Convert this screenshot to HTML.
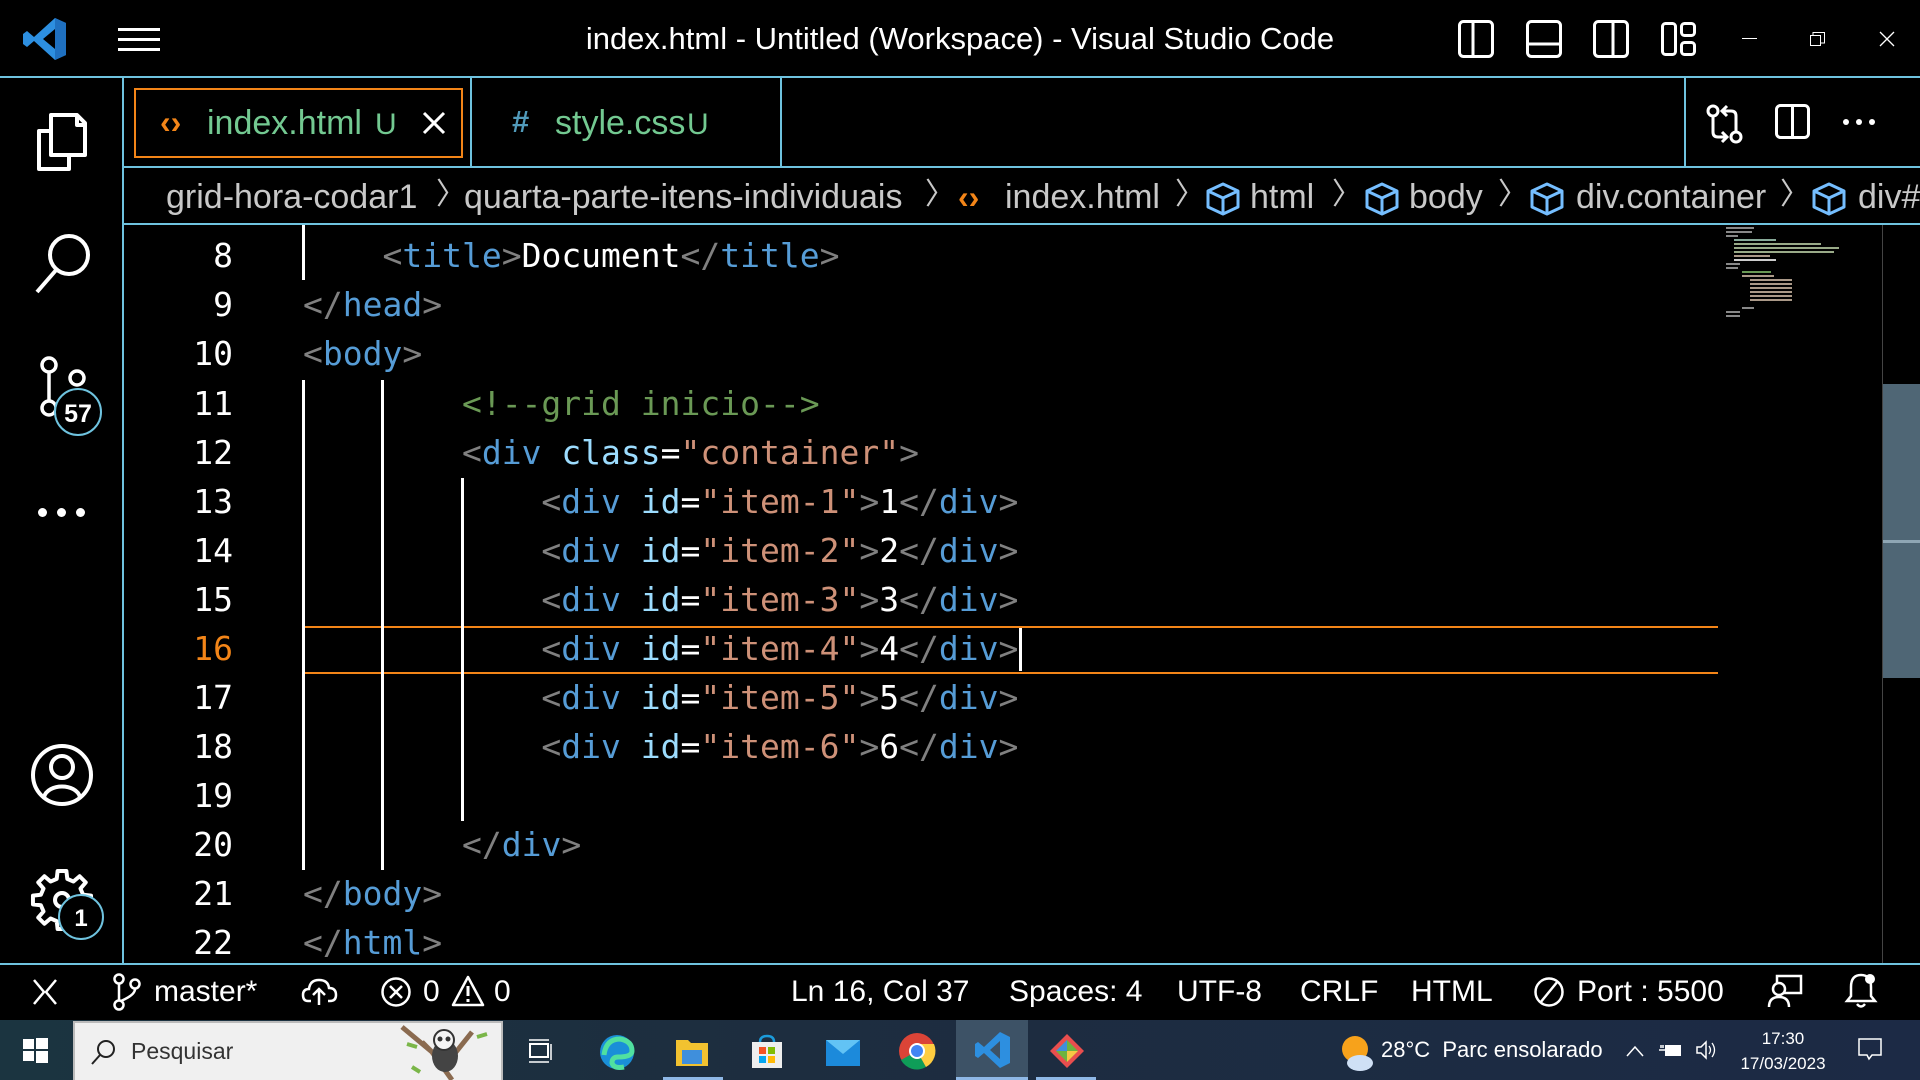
<!DOCTYPE html>
<html><head><meta charset="utf-8">
<style>
*{margin:0;padding:0;box-sizing:border-box}
body{width:1920px;height:1080px;background:#000;overflow:hidden;position:relative;font-family:"Liberation Sans","DejaVu Sans",sans-serif;color:#fff}
.a{position:absolute}
.bl{background:#6fc3df}
.ui{font-size:31px;white-space:nowrap;line-height:1}
.code{font-family:"DejaVu Sans Mono","Liberation Mono",monospace;font-size:33px;white-space:pre;line-height:49px}
.ln{position:absolute;left:120px;width:113px;text-align:right}
.cl{position:absolute;left:303px}
.g{color:#808080}.t{color:#569cd6}.at{color:#9cdcfe}.s{color:#ce9178}.c{color:#6a9955}.w{color:#fff}
.gd{position:absolute;width:3px;background:#fff}
.bc{color:#c8c8c8}
svg{position:absolute;overflow:visible}
.st{font-size:30px;top:975px;position:absolute;white-space:nowrap}
</style></head><body>

<!-- title bar -->
<svg style="left:22px;top:16px" width="46" height="46" viewBox="0 0 46 46"><path d="M33 2 L44 7 V39 L33 44 L12 25 L5 31 L1 28 V18 L5 15 L12 21 Z M33 13 L21 23 L33 33 Z" fill="#2d8fe0"/><path d="M33 2 L44 7 V39 L33 44 Z" fill="#1f70c0"/></svg>
<div class="a" style="left:118px;top:28px;width:42px;height:3px;background:#fff"></div>
<div class="a" style="left:118px;top:38px;width:42px;height:3px;background:#fff"></div>
<div class="a" style="left:118px;top:48px;width:42px;height:3px;background:#fff"></div>
<div class="a ui" style="left:0;width:1920px;text-align:center;top:23px;font-size:31px">index.html - Untitled (Workspace) - Visual Studio Code</div>
<svg style="left:1458px;top:20px" width="36" height="38"><rect x="1.5" y="1.5" width="33" height="35" rx="4" fill="none" stroke="#fff" stroke-width="3"/><line x1="15" y1="2" x2="15" y2="36" stroke="#fff" stroke-width="3"/></svg>
<svg style="left:1526px;top:20px" width="36" height="38"><rect x="1.5" y="1.5" width="33" height="35" rx="4" fill="none" stroke="#fff" stroke-width="3"/><line x1="2" y1="24" x2="34" y2="24" stroke="#fff" stroke-width="3"/></svg>
<svg style="left:1593px;top:20px" width="36" height="38"><rect x="1.5" y="1.5" width="33" height="35" rx="4" fill="none" stroke="#fff" stroke-width="3"/><line x1="20" y1="2" x2="20" y2="36" stroke="#fff" stroke-width="3"/></svg>
<svg style="left:1661px;top:22px" width="36" height="34"><rect x="1.5" y="1.5" width="13" height="31" rx="3" fill="none" stroke="#fff" stroke-width="3"/><rect x="20.5" y="1.5" width="13" height="12" rx="3" fill="none" stroke="#fff" stroke-width="3"/><rect x="20.5" y="20.5" width="13" height="12" rx="3" fill="none" stroke="#fff" stroke-width="3"/></svg>
<div class="a" style="left:1742px;top:38px;width:15px;height:1px;background:#fff"></div>
<svg style="left:1810px;top:31px" width="16" height="16"><rect x="0.5" y="4.5" width="10" height="10" fill="none" stroke="#fff"/><path d="M3 4 V1.5 H14.5 V12 H11" fill="none" stroke="#fff"/></svg>
<svg style="left:1879px;top:31px" width="16" height="16"><path d="M1 1 L15 15 M15 1 L1 15" stroke="#fff" stroke-width="1.3"/></svg>
<div class="a bl" style="left:0;top:76px;width:1920px;height:2px"></div>

<!-- activity bar -->
<div class="a bl" style="left:122px;top:77px;width:2px;height:887px"></div>
<svg style="left:33px;top:109px" width="58" height="62" viewBox="0 0 58 62"><path d="M18 10 V46 H52 V14 L44 6 H18 Z M44 6 V16 H52" fill="none" stroke="#fff" stroke-width="4" stroke-linejoin="round"/><path d="M18 22 H6 V60 H36 V48" fill="none" stroke="#fff" stroke-width="4" stroke-linejoin="round"/></svg>
<svg style="left:33px;top:232px" width="60" height="62"><circle cx="36" cy="23" r="19" fill="none" stroke="#fff" stroke-width="4"/><line x1="24" y1="37" x2="4" y2="60" stroke="#fff" stroke-width="4"/></svg>
<svg style="left:37px;top:356px" width="70" height="74"><circle cx="12" cy="9" r="7" fill="none" stroke="#fff" stroke-width="3.5"/><circle cx="40" cy="22" r="7" fill="none" stroke="#fff" stroke-width="3.5"/><circle cx="12" cy="52" r="7" fill="none" stroke="#fff" stroke-width="3.5"/><line x1="12" y1="16" x2="12" y2="45" stroke="#fff" stroke-width="3.5"/><circle cx="41" cy="56" r="23" fill="#000" stroke="#6fc3df" stroke-width="2"/><text x="41" y="66" fill="#fff" font-size="25" font-family="Liberation Sans" font-weight="bold" text-anchor="middle">57</text></svg>
<div class="a" style="left:38px;top:508px;width:9px;height:9px;border-radius:50%;background:#fff"></div>
<div class="a" style="left:57px;top:508px;width:9px;height:9px;border-radius:50%;background:#fff"></div>
<div class="a" style="left:76px;top:508px;width:9px;height:9px;border-radius:50%;background:#fff"></div>
<svg style="left:30px;top:743px" width="64" height="64"><circle cx="32" cy="32" r="29" fill="none" stroke="#fff" stroke-width="4"/><circle cx="32" cy="24" r="11" fill="none" stroke="#fff" stroke-width="4"/><path d="M14 54 C18 40 46 40 50 54" fill="none" stroke="#fff" stroke-width="4"/></svg>
<svg style="left:30px;top:868px" width="76" height="72"><g transform="translate(32,32)"><path d="M-5 -29 H5 L6 -20 L13 -17 L20 -23 L27 -16 L21 -9 L24 -2 L33 -1 V9 L24 10 L21 17 L27 24 L20 31 L13 25 L6 28 L5 37 H-5 L-6 28 L-13 25 L-20 31 L-27 24 L-21 17 L-24 10 L-33 9 V-1 L-24 -2 L-21 -9 L-27 -16 L-20 -23 L-13 -17 L-6 -20 Z" transform="scale(0.88) translate(0,-4)" fill="none" stroke="#fff" stroke-width="4.5" stroke-linejoin="round"/><circle cx="0" cy="0" r="7" fill="none" stroke="#fff" stroke-width="4"/></g><circle cx="51" cy="49" r="22" fill="#000" stroke="#6fc3df" stroke-width="2"/><text x="51" y="58" fill="#fff" font-size="24" font-family="Liberation Sans" font-weight="bold" text-anchor="middle">1</text></svg>

<!-- tabs -->
<div class="a" style="left:134px;top:88px;width:329px;height:70px;border:2px solid #f38518"></div>
<div class="a ui" style="left:160px;top:106px;color:#f38518;font-size:32px;font-weight:bold">‹›</div>
<div class="a ui" style="left:207px;top:106px;color:#73c991;font-size:34px">index.html</div>
<div class="a ui" style="left:375px;top:110px;color:#73c991;font-size:30px">U</div>
<svg style="left:423px;top:112px" width="22" height="22"><path d="M1 1 L21 21 M21 1 L1 21" stroke="#fff" stroke-width="3"/></svg>
<div class="a bl" style="left:470px;top:77px;width:2px;height:90px"></div>
<div class="a ui" style="left:512px;top:106px;color:#519aba;font-size:31px;font-weight:bold">#</div>
<div class="a ui" style="left:555px;top:106px;color:#73c991;font-size:34px">style.css</div>
<div class="a ui" style="left:687px;top:110px;color:#73c991;font-size:30px">U</div>
<div class="a bl" style="left:780px;top:77px;width:2px;height:90px"></div>
<div class="a bl" style="left:1684px;top:77px;width:2px;height:90px"></div>
<svg style="left:1706px;top:104px" width="38" height="40"><circle cx="7" cy="7" r="5" fill="none" stroke="#fff" stroke-width="3"/><circle cx="30" cy="33" r="5" fill="none" stroke="#fff" stroke-width="3"/><path d="M7 12 V28 Q7 33 12 33 H20 M16 28 L21 33 L16 38" fill="none" stroke="#fff" stroke-width="3"/><path d="M30 28 V12 Q30 7 25 7 H17 M21 2 L16 7 L21 12" fill="none" stroke="#fff" stroke-width="3"/></svg>
<svg style="left:1775px;top:104px" width="36" height="36"><rect x="1.5" y="1.5" width="32" height="32" rx="4" fill="none" stroke="#fff" stroke-width="3"/><line x1="17.5" y1="2" x2="17.5" y2="34" stroke="#fff" stroke-width="3"/></svg>
<div class="a" style="left:1843px;top:119px;width:6px;height:6px;border-radius:50%;background:#fff"></div>
<div class="a" style="left:1856px;top:119px;width:6px;height:6px;border-radius:50%;background:#fff"></div>
<div class="a" style="left:1869px;top:119px;width:6px;height:6px;border-radius:50%;background:#fff"></div>
<div class="a bl" style="left:123px;top:166px;width:1797px;height:2px"></div>

<!-- breadcrumbs -->
<div class="a ui bc" style="left:166px;top:180px;font-size:34px">grid-hora-codar1</div>
<div class="a ui bc" style="left:436px;top:180px;font-size:30px">〉</div>
<div class="a ui bc" style="left:464px;top:180px;font-size:34px">quarta-parte-itens-individuais</div>
<div class="a ui bc" style="left:925px;top:180px;font-size:30px">〉</div>
<div class="a ui" style="left:958px;top:181px;font-size:32px;color:#f38518;font-weight:bold">‹›</div>
<div class="a ui bc" style="left:1005px;top:180px;font-size:34px">index.html</div>
<div class="a ui bc" style="left:1175px;top:180px;font-size:30px">〉</div>
<div class="a ui bc" style="left:1250px;top:180px;font-size:34px">html</div>
<div class="a ui bc" style="left:1332px;top:180px;font-size:30px">〉</div>
<div class="a ui bc" style="left:1409px;top:180px;font-size:34px">body</div>
<div class="a ui bc" style="left:1498px;top:180px;font-size:30px">〉</div>
<div class="a ui bc" style="left:1576px;top:180px;font-size:34px">div.container</div>
<div class="a ui bc" style="left:1780px;top:180px;font-size:30px">〉</div>
<div class="a ui bc" style="left:1858px;top:180px;font-size:34px">div#</div>
<svg style="left:1206px;top:182px" width="34" height="34"><g fill="none" stroke="#75beff" stroke-width="3" stroke-linejoin="round"><path d="M17 2 L32 9 V25 L17 32 L2 25 V9 Z"/><path d="M2 9 L17 16 L32 9 M17 16 V32"/></g></svg>
<svg style="left:1365px;top:182px" width="34" height="34"><g fill="none" stroke="#75beff" stroke-width="3" stroke-linejoin="round"><path d="M17 2 L32 9 V25 L17 32 L2 25 V9 Z"/><path d="M2 9 L17 16 L32 9 M17 16 V32"/></g></svg>
<svg style="left:1530px;top:182px" width="34" height="34"><g fill="none" stroke="#75beff" stroke-width="3" stroke-linejoin="round"><path d="M17 2 L32 9 V25 L17 32 L2 25 V9 Z"/><path d="M2 9 L17 16 L32 9 M17 16 V32"/></g></svg>
<svg style="left:1812px;top:182px" width="34" height="34"><g fill="none" stroke="#75beff" stroke-width="3" stroke-linejoin="round"><path d="M17 2 L32 9 V25 L17 32 L2 25 V9 Z"/><path d="M2 9 L17 16 L32 9 M17 16 V32"/></g></svg>
<div class="a bl" style="left:123px;top:223px;width:1797px;height:2px"></div>

<!-- editor -->
<div class="a" style="left:303px;top:626px;width:1415px;height:48px;border-top:2px solid #f38518;border-bottom:2px solid #f38518"></div>
<div class="gd" style="left:302px;top:225px;height:55px"></div>
<div class="gd" style="left:302px;top:380px;height:490px"></div>
<div class="gd" style="left:381px;top:380px;height:490px"></div>
<div class="gd" style="left:461px;top:478px;height:343px"></div>
<div class="a code" style="left:0;top:231px;width:1880px;height:735px;overflow:hidden">
<div class="ln" style="top:0">8</div><div class="cl" style="top:0">    <span class="g">&lt;</span><span class="t">title</span><span class="g">&gt;</span>Document<span class="g">&lt;/</span><span class="t">title</span><span class="g">&gt;</span></div>
<div class="ln" style="top:49px">9</div><div class="cl" style="top:49px"><span class="g">&lt;/</span><span class="t">head</span><span class="g">&gt;</span></div>
<div class="ln" style="top:98px">10</div><div class="cl" style="top:98px"><span class="g">&lt;</span><span class="t">body</span><span class="g">&gt;</span></div>
<div class="ln" style="top:148px">11</div><div class="cl" style="top:148px">        <span class="c">&lt;!--grid inicio--&gt;</span></div>
<div class="ln" style="top:197px">12</div><div class="cl" style="top:197px">        <span class="g">&lt;</span><span class="t">div</span> <span class="at">class</span>=<span class="s">"container"</span><span class="g">&gt;</span></div>
<div class="ln" style="top:246px">13</div><div class="cl" style="top:246px">            <span class="g">&lt;</span><span class="t">div</span> <span class="at">id</span>=<span class="s">"item-1"</span><span class="g">&gt;</span>1<span class="g">&lt;/</span><span class="t">div</span><span class="g">&gt;</span></div>
<div class="ln" style="top:295px">14</div><div class="cl" style="top:295px">            <span class="g">&lt;</span><span class="t">div</span> <span class="at">id</span>=<span class="s">"item-2"</span><span class="g">&gt;</span>2<span class="g">&lt;/</span><span class="t">div</span><span class="g">&gt;</span></div>
<div class="ln" style="top:344px">15</div><div class="cl" style="top:344px">            <span class="g">&lt;</span><span class="t">div</span> <span class="at">id</span>=<span class="s">"item-3"</span><span class="g">&gt;</span>3<span class="g">&lt;/</span><span class="t">div</span><span class="g">&gt;</span></div>
<div class="ln" style="top:393px;color:#f38518">16</div><div class="cl" style="top:393px">            <span class="g">&lt;</span><span class="t">div</span> <span class="at">id</span>=<span class="s">"item-4"</span><span class="g">&gt;</span>4<span class="g">&lt;/</span><span class="t">div</span><span class="g">&gt;</span></div>
<div class="ln" style="top:442px">17</div><div class="cl" style="top:442px">            <span class="g">&lt;</span><span class="t">div</span> <span class="at">id</span>=<span class="s">"item-5"</span><span class="g">&gt;</span>5<span class="g">&lt;/</span><span class="t">div</span><span class="g">&gt;</span></div>
<div class="ln" style="top:491px">18</div><div class="cl" style="top:491px">            <span class="g">&lt;</span><span class="t">div</span> <span class="at">id</span>=<span class="s">"item-6"</span><span class="g">&gt;</span>6<span class="g">&lt;/</span><span class="t">div</span><span class="g">&gt;</span></div>
<div class="ln" style="top:540px">19</div>
<div class="ln" style="top:589px">20</div><div class="cl" style="top:589px">        <span class="g">&lt;/</span><span class="t">div</span><span class="g">&gt;</span></div>
<div class="ln" style="top:638px">21</div><div class="cl" style="top:638px"><span class="g">&lt;/</span><span class="t">body</span><span class="g">&gt;</span></div>
<div class="ln" style="top:687px">22</div><div class="cl" style="top:687px"><span class="g">&lt;/</span><span class="t">html</span><span class="g">&gt;</span></div>
</div>
<div class="a" style="left:1019px;top:628px;width:3px;height:43px;background:#fff"></div>

<!-- minimap -->
<svg style="left:1726px;top:226px" width="120" height="95">
<g stroke-width="2">
<line x1="0" y1="2" x2="28" y2="2" stroke="#888"/><line x1="0" y1="6" x2="26" y2="6" stroke="#888"/><line x1="0" y1="10" x2="12" y2="10" stroke="#888"/>
<line x1="8" y1="14" x2="50" y2="14" stroke="#8a9"/><line x1="8" y1="18" x2="95" y2="18" stroke="#9a8"/><line x1="8" y1="22" x2="113" y2="22" stroke="#9a8"/><line x1="8" y1="26" x2="108" y2="26" stroke="#9a8"/><line x1="8" y1="30" x2="44" y2="30" stroke="#a98"/><line x1="8" y1="34" x2="50" y2="34" stroke="#ccc"/>
<line x1="0" y1="38" x2="14" y2="38" stroke="#888"/><line x1="0" y1="42" x2="12" y2="42" stroke="#888"/>
<line x1="16" y1="46" x2="45" y2="46" stroke="#6a9955"/><line x1="16" y1="50" x2="48" y2="50" stroke="#a98"/>
<line x1="24" y1="54" x2="66" y2="54" stroke="#a98"/><line x1="24" y1="58" x2="66" y2="58" stroke="#a98"/><line x1="24" y1="62" x2="66" y2="62" stroke="#a98"/><line x1="24" y1="66" x2="66" y2="66" stroke="#a98"/><line x1="24" y1="70" x2="66" y2="70" stroke="#a98"/><line x1="24" y1="74" x2="66" y2="74" stroke="#a98"/>
<line x1="16" y1="82" x2="28" y2="82" stroke="#888"/><line x1="0" y1="86" x2="14" y2="86" stroke="#888"/><line x1="0" y1="90" x2="14" y2="90" stroke="#888"/>
</g></svg>
<div class="a" style="left:1882px;top:225px;width:1px;height:739px;background:#444"></div>
<div class="a" style="left:1883px;top:384px;width:37px;height:294px;background:#4f6675"></div>
<div class="a" style="left:1883px;top:540px;width:37px;height:3px;background:#8fa6b4"></div>

<!-- status bar -->
<div class="a bl" style="left:0;top:963px;width:1920px;height:2px"></div>
<svg style="left:32px;top:978px" width="26" height="28"><path d="M2 2 L12 14 L2 26 M24 2 L14 14 L24 26" fill="none" stroke="#fff" stroke-width="2.5"/></svg>
<svg style="left:112px;top:973px" width="30" height="38"><circle cx="7" cy="6" r="4.5" fill="none" stroke="#fff" stroke-width="2.5"/><circle cx="23" cy="11" r="4.5" fill="none" stroke="#fff" stroke-width="2.5"/><circle cx="7" cy="32" r="4.5" fill="none" stroke="#fff" stroke-width="2.5"/><path d="M7 11 V27 M23 16 Q23 22 9 28" fill="none" stroke="#fff" stroke-width="2.5"/></svg>
<div class="st" style="left:154px">master*</div>
<svg style="left:302px;top:977px" width="36" height="30"><path d="M9 24 H6 Q1 24 1 18 Q1 12 7 12 Q8 3 17 3 Q26 3 27 11 Q34 11 34 18 Q34 24 28 24 H26" fill="none" stroke="#fff" stroke-width="2.5"/><path d="M17 28 V13 M11 18 L17 12 L23 18" fill="none" stroke="#fff" stroke-width="2.5"/></svg>
<svg style="left:380px;top:976px" width="32" height="32"><circle cx="16" cy="16" r="13.5" fill="none" stroke="#fff" stroke-width="2.5"/><path d="M10 10 L22 22 M22 10 L10 22" stroke="#fff" stroke-width="2.5"/></svg>
<div class="st" style="left:423px">0</div>
<svg style="left:451px;top:975px" width="34" height="32"><path d="M17 2 L32 30 H2 Z" fill="none" stroke="#fff" stroke-width="2.5" stroke-linejoin="round"/><path d="M17 11 V21 M17 24 V27" stroke="#fff" stroke-width="3"/></svg>
<div class="st" style="left:494px">0</div>
<div class="st" style="left:791px">Ln 16, Col 37</div>
<div class="st" style="left:1009px">Spaces: 4</div>
<div class="st" style="left:1177px">UTF-8</div>
<div class="st" style="left:1300px">CRLF</div>
<div class="st" style="left:1411px">HTML</div>
<svg style="left:1533px;top:976px" width="32" height="32"><circle cx="16" cy="16" r="13.5" fill="none" stroke="#fff" stroke-width="2.5"/><path d="M25 5 L7 27" stroke="#fff" stroke-width="2.5"/></svg>
<div class="st" style="left:1577px">Port : 5500</div>
<svg style="left:1767px;top:974px" width="36" height="36"><rect x="10" y="2" width="24" height="17" fill="none" stroke="#fff" stroke-width="2.5"/><circle cx="12" cy="15" r="6" fill="#000" stroke="#fff" stroke-width="2.5"/><path d="M2 33 Q2 23 12 23 Q22 23 22 33" fill="#000" stroke="#fff" stroke-width="2.5"/></svg>
<svg style="left:1845px;top:972px" width="34" height="38"><path d="M16 3 Q6 3 6 15 V24 L2 29 H30 L26 24 V15 Q26 3 16 3 Z M12 32 Q16 37 20 32" fill="none" stroke="#fff" stroke-width="2.5"/><circle cx="25" cy="7" r="5" fill="#fff"/></svg>

<!-- taskbar -->
<div class="a" style="left:0;top:1020px;width:1920px;height:60px;background:linear-gradient(90deg,#1b3440,#1d2d3f 40%,#1c2a45)"></div>
<svg style="left:23px;top:1038px" width="25" height="25"><rect x="0" y="1" width="11" height="10" fill="#fff"/><rect x="13" y="0" width="12" height="11" fill="#fff"/><rect x="0" y="13" width="11" height="10" fill="#fff"/><rect x="13" y="13" width="12" height="12" fill="#fff"/></svg>
<div class="a" style="left:73px;top:1021px;width:430px;height:59px;background:#f0f0f0;border:2px solid #bbb;border-bottom:0"></div>
<svg style="left:90px;top:1039px" width="26" height="26"><circle cx="16" cy="10" r="8" fill="none" stroke="#222" stroke-width="2"/><path d="M10 16 L2 25" stroke="#222" stroke-width="2"/></svg>
<div class="a" style="left:131px;top:1038px;font-size:23px;color:#333">Pesquisar</div>
<svg style="left:392px;top:1022px" width="110" height="58"><path d="M10 5 L40 30 L60 58 M80 10 L60 35 M40 30 L30 20" stroke="#8a6a4f" stroke-width="5" fill="none"/><ellipse cx="53" cy="34" rx="13" ry="16" fill="#444"/><circle cx="52" cy="18" r="10" fill="#f4f4f4" stroke="#333" stroke-width="2"/><circle cx="48" cy="17" r="2.5" fill="#333"/><circle cx="56" cy="17" r="2.5" fill="#333"/><path d="M15 22 L25 25 M85 15 L95 12 M20 45 L28 50" stroke="#7ab648" stroke-width="4"/></svg>
<svg style="left:527px;top:1038px" width="26" height="26"><rect x="3" y="6" width="18" height="13" fill="none" stroke="#fff" stroke-width="2"/><path d="M2 2 H22 M2 24 H22 M24 6 V22" stroke="#fff" stroke-width="1.5"/></svg>
<svg style="left:598px;top:1033px" width="38" height="38"><circle cx="19" cy="19" r="17" fill="#1a8fd8"/><path d="M6 22 Q8 6 22 6 Q34 8 34 18 Q34 24 20 24 Q14 24 14 30 Q16 36 26 34" fill="none" stroke="#50e0a0" stroke-width="5"/></svg>
<svg style="left:674px;top:1034px" width="36" height="34"><path d="M2 6 H14 L17 9 H34 V32 H2 Z" fill="#f2c230"/><rect x="8" y="16" width="20" height="14" fill="#3f8fdc"/></svg>
<div class="a" style="left:663px;top:1077px;width:60px;height:3px;background:#8fb8e6"></div>
<svg style="left:750px;top:1034px" width="34" height="36"><path d="M2 8 H32 V34 H2 Z" fill="#eee"/><path d="M10 8 Q10 2 17 2 Q24 2 24 8" fill="none" stroke="#1b9bdb" stroke-width="2.5"/><rect x="9" y="13" width="7" height="7" fill="#f35325"/><rect x="18" y="13" width="7" height="7" fill="#81bc06"/><rect x="9" y="22" width="7" height="7" fill="#05a6f0"/><rect x="18" y="22" width="7" height="7" fill="#ffba08"/></svg>
<svg style="left:824px;top:1034px" width="38" height="34"><path d="M2 6 H36 V32 H2 Z" fill="#1c8adb"/><path d="M2 6 L19 20 L36 6" fill="#62c3f5"/></svg>
<svg style="left:898px;top:1032px" width="38" height="38"><circle cx="19" cy="19" r="18" fill="#db4437"/><path d="M19 19 L3 28 A18 18 0 0 0 28 35 Z" fill="#0f9d58"/><path d="M19 19 L28 35 A18 18 0 0 0 36 12 L19 12 Z" fill="#ffcd40"/><circle cx="19" cy="19" r="8" fill="#fff"/><circle cx="19" cy="19" r="6" fill="#4285f4"/></svg>
<div class="a" style="left:956px;top:1020px;width:72px;height:60px;background:#3d5266"></div>
<svg style="left:974px;top:1030px" width="38" height="40"><path d="M26 2 L36 7 V33 L26 38 L10 23 L4 28 L1 26 V14 L4 12 L10 17 Z M26 11 L16 20 L26 29 Z" fill="#2d8fe0"/></svg>
<div class="a" style="left:956px;top:1077px;width:72px;height:3px;background:#8fb8e6"></div>
<svg style="left:1048px;top:1032px" width="38" height="38"><path d="M19 2 L36 19 L19 36 L2 19 Z" fill="#e94e4e"/><path d="M19 8 L30 19 L19 30 L8 19 Z" fill="#6cb33f"/><path d="M19 19 L30 19 L19 30 Z" fill="#f6c744"/><path d="M8 19 L19 8 L19 19 Z" fill="#3f8fdc"/></svg>
<div class="a" style="left:1036px;top:1077px;width:60px;height:3px;background:#8fb8e6"></div>
<svg style="left:1340px;top:1033px" width="34" height="40"><circle cx="15" cy="16" r="13" fill="#f7a21b"/><ellipse cx="20" cy="30" rx="13" ry="8" fill="#cfe0f5"/></svg>
<div class="a" style="left:1381px;top:1037px;font-size:22px;color:#fff;white-space:nowrap">28°C&nbsp; Parc ensolarado</div>
<svg style="left:1626px;top:1045px" width="18" height="12"><path d="M1 11 L9 2 L17 11" fill="none" stroke="#fff" stroke-width="1.5"/></svg>
<svg style="left:1659px;top:1042px" width="24" height="16"><rect x="6" y="3" width="16" height="11" fill="#fff"/><path d="M0 8 H6 M2 3 V6 M4 3 V6" stroke="#fff" stroke-width="1.5"/></svg>
<svg style="left:1696px;top:1040px" width="22" height="20"><path d="M1 7 H5 L10 2 V18 L5 13 H1 Z" fill="none" stroke="#fff" stroke-width="1.5"/><path d="M13 6 Q16 10 13 14 M16 3 Q21 10 16 17" fill="none" stroke="#fff" stroke-width="1.3"/></svg>
<div class="a" style="left:1720px;top:1026px;width:126px;text-align:center;font-size:17px;color:#fff;line-height:25px">17:30<br>17/03/2023</div>
<svg style="left:1858px;top:1038px" width="24" height="26"><path d="M1 1 H23 V17 H14 L11 21 L9 17 H1 Z" fill="none" stroke="#fff" stroke-width="1.5"/></svg>
</body></html>
